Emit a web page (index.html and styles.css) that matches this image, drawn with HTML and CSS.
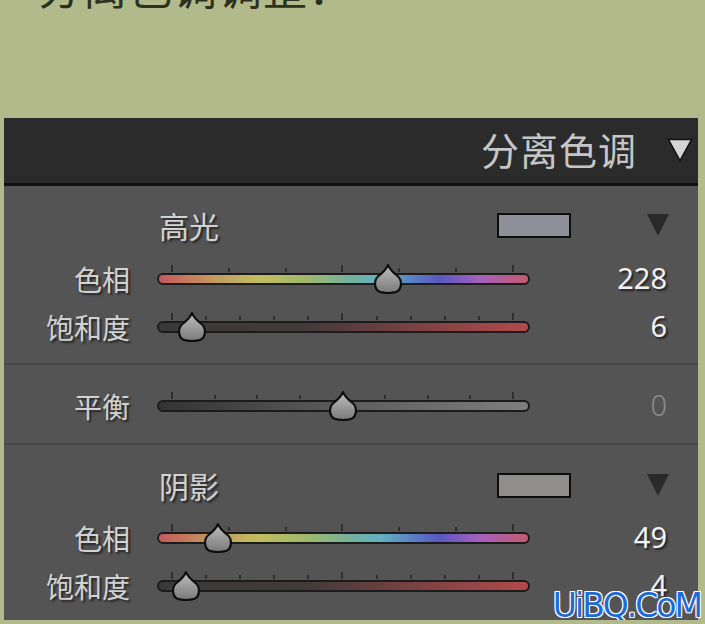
FILE: index.html
```html
<!DOCTYPE html>
<html lang="zh-CN">
	<head>
		<meta charset="UTF-8">
		<title>分离色调</title>
		<link rel="stylesheet" href="styles.css">
	</head>
	<body>
		<div class="intro">
			<h1 class="intro-title">分离色调调整：</h1>
		</div>

		<div class="panel">
			<div class="panel-head">
				<span class="panel-title">分离色调</span>
				<svg class="panel-arrow" width="26" height="24" viewBox="0 0 26 24">
					<path d="M1.5 1.5 H24.5 L13 22.5 Z" fill="#d4d4d4" stroke="#111" stroke-width="1.5"/>
				</svg>
			</div>

			<!-- 高光 -->
			<div class="section section-top">
				<div class="group-head">
					<span class="group-name">高光</span>
					<span class="swatch swatch-high"></span>
					<span class="drop"></span>
				</div>
				<div class="row">
					<span class="label">色相</span>
					<div class="slider">
						<div class="ticks ticks-7"><i class="long"></i><i></i><i></i><i class="long"></i><i></i><i></i><i class="long"></i></div>
						<div class="track track-hue"></div>
						<svg class="thumb" style="--v:0.633" width="30" height="30" viewBox="0 0 30 30"><use href="#drop"/></svg>
					</div>
					<span class="value">228</span>
				</div>
				<div class="row">
					<span class="label">饱和度</span>
					<div class="slider">
						<div class="ticks"><i class="long"></i><i></i><i></i><i></i><i></i><i class="long"></i><i></i><i></i><i></i><i></i><i class="long"></i></div>
						<div class="track track-sat"></div>
						<svg class="thumb" style="--v:0.06" width="30" height="30" viewBox="0 0 30 30"><use href="#drop"/></svg>
					</div>
					<span class="value">6</span>
				</div>
			</div>

			<!-- 平衡 -->
			<div class="section section-mid">
				<div class="row">
					<span class="label">平衡</span>
					<div class="slider">
						<div class="ticks"><i class="long"></i><i></i><i></i><i></i><i></i><i></i><i></i><i></i><i class="long"></i></div>
						<div class="track track-bal"></div>
						<svg class="thumb" style="--v:0.5" width="30" height="30" viewBox="0 0 30 30"><use href="#drop"/></svg>
					</div>
					<span class="value value-dim">0</span>
				</div>
			</div>

			<!-- 阴影 -->
			<div class="section section-bottom">
				<div class="group-head">
					<span class="group-name">阴影</span>
					<span class="swatch swatch-low"></span>
					<span class="drop"></span>
				</div>
				<div class="row">
					<span class="label">色相</span>
					<div class="slider">
						<div class="ticks ticks-7"><i class="long"></i><i></i><i></i><i class="long"></i><i></i><i></i><i class="long"></i></div>
						<div class="track track-hue"></div>
						<svg class="thumb" style="--v:0.136" width="30" height="30" viewBox="0 0 30 30"><use href="#drop"/></svg>
					</div>
					<span class="value">49</span>
				</div>
				<div class="row">
					<span class="label">饱和度</span>
					<div class="slider">
						<div class="ticks"><i class="long"></i><i></i><i></i><i></i><i></i><i class="long"></i><i></i><i></i><i></i><i></i><i class="long"></i></div>
						<div class="track track-sat"></div>
						<svg class="thumb" style="--v:0.04" width="30" height="30" viewBox="0 0 30 30"><use href="#drop"/></svg>
					</div>
					<span class="value">4</span>
				</div>
			</div>

			<div class="watermark">UiBQ.CoM</div>
		</div>

		<!-- 滑块形状 -->
		<svg width="0" height="0" class="defs">
			<defs>
				<linearGradient id="dropFill" x1="0" y1="0" x2="0" y2="1">
					<stop offset="0" stop-color="#bdbdbd"/>
					<stop offset="1" stop-color="#7a7a7a"/>
				</linearGradient>
				<path id="drop" d="M15 1.2 C16.5 5 20 8.5 24.5 12 C29.5 16 29 25 23.5 27.8 C19.5 29.4 10.5 29.4 6.5 27.8 C1 25 0.5 16 5.5 12 C10 8.5 13.5 5 15 1.2 Z" fill="url(#dropFill)" stroke="#0e0e0e" stroke-width="2.2"/>
			</defs>
		</svg>
	</body>
</html>
```
FILE: styles.css
```css
*{
	margin: 0;
	padding: 0;
}
body{
	background: #b2b98b;
	font-family: "Noto Sans CJK SC", "Noto Sans", sans-serif;
}
.defs{
	position: absolute;
}

/* 顶部被裁掉的标题 */
.intro{
	height: 118px;
	overflow: hidden;
}
.intro-title{
	margin: -36px 0 0 38px;
	font-size: 44px;
	line-height: 44px;
	font-weight: normal;
	color: #2c3120;
	letter-spacing: 1px;
}

.panel{
	position: relative;
	width: 694px;
	margin-left: 4px;
	height: 502px;
	background: #545454;
}
.panel-head{
	height: 65px;
	background: #2b2b2b;
	border-bottom: 3px solid #111;
	display: flex;
	align-items: center;
	justify-content: flex-end;
}
.panel-title{
	font-size: 38px;
	color: #c6c6c6;
	letter-spacing: 1px;
	margin-right: 30px;
	margin-top: -4px;
}
.panel-arrow{
	margin-right: 5px;
	margin-top: -2px;
}

.section{
	border-bottom: 2px solid #464646;
}
.section-top{
	padding: 14px 0 12px;
}
.section-mid{
	padding: 17px 0 13px;
}
.section-bottom{
	padding: 15px 0 10px;
	border-bottom: none;
}

.group-head{
	height: 50px;
	display: flex;
	align-items: center;
	margin-bottom: 5px;
}
.section-bottom .group-head{
	margin-bottom: 4px;
}
.group-name{
	margin-left: 155px;
	font-size: 30px;
	color: #d2d2d2;
	text-shadow: 2px 2px 2px #262626;
	width: 338px;
}
.swatch{
	width: 70px;
	height: 21px;
	border: 2px solid #0d0d0d;
}
.swatch-high{
	background: #8e8f99;
}
.swatch-low{
	background: #8f8e8a;
}
.drop{
	margin-left: 76px;
	width: 0;
	height: 0;
	border-left: 11px solid transparent;
	border-right: 11px solid transparent;
	border-top: 22px solid #2a2a2a;
}

.row{
	height: 48px;
	display: grid;
	grid-template-columns: 126px 373px 110px;
	column-gap: 27px;
	align-items: center;
}
.label{
	text-align: right;
	font-size: 28px;
	color: #d2d2d2;
	text-shadow: 2px 2px 2px #262626;
}
.value{
	text-align: right;
	font-family: "Noto Sans", sans-serif;
	font-size: 29px;
	color: #f2f2f2;
	text-shadow: 2px 2px 2px #242424;
	margin-top: -4px;
}
.value-dim{
	color: #8b8b8b;
	text-shadow: none;
	font-weight: 300;
}

.slider{
	position: relative;
	height: 48px;
	display: flex;
	align-items: center;
}
.track{
	width: 100%;
	height: 8px;
	border: 2px solid #1c1c1c;
	border-radius: 6px;
}
.track-hue{
	background: linear-gradient(to right, #c45a5c 0%, #c39a5e 15%, #c2bd5e 27%, #9fb86c 40%, #74b09c 52%, #62b2c2 60%, #5a78c4 70%, #5a58c0 76%, #a55fbd 87%, #c35b70 100%);
}
.track-sat{
	background: linear-gradient(to right, #3a3a3a 0%, #433a3a 40%, #b24a4c 100%);
}
.track-bal{
	background: linear-gradient(to right, #333 0%, #5c5c5c 50%, #7e7e7e 100%);
}
.ticks{
	position: absolute;
	top: 9px;
	left: 14px;
	right: 16px;
	height: 8px;
	display: flex;
	justify-content: space-between;
	align-items: flex-end;
}
.ticks i{
	display: block;
	width: 2px;
	height: 4px;
	background: #2e2e2e;
}
.ticks i.long{
	height: 7px;
}
.thumb{
	position: absolute;
	top: 9px;
	left: calc(15px + var(--v) * 341px - 15px);
}

/* 水印 */
.watermark{
	position: absolute;
	right: -3px;
	bottom: -2px;
	font-family: "DejaVu Sans", sans-serif;
	font-size: 33px;
	line-height: 33px;
	letter-spacing: -2px;
	color: #1f6bd6;
	text-shadow: -1px -1px 0 #fff, 1px -1px 0 #fff, -1px 1px 0 #fff, 1px 1px 0 #fff;
}
```
